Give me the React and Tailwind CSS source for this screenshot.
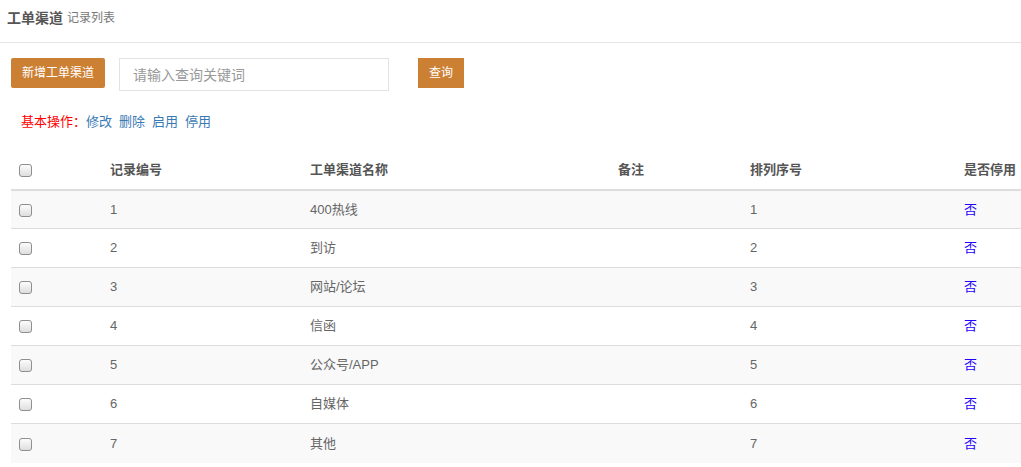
import React from 'react';

const rows = [
    { id: 1, name: '400热线', sort: 1 },
    { id: 2, name: '到访', sort: 2 },
    { id: 3, name: '网站/论坛', sort: 3 },
    { id: 4, name: '信函', sort: 4 },
    { id: 5, name: '公众号/APP', sort: 5 },
    { id: 6, name: '自媒体', sort: 6 },
    { id: 7, name: '其他', sort: 7 },
];

const Box = () => (
    <span className="inline-block w-[13px] h-[13px] rounded-[3px] border border-[#8f8f8f] bg-gradient-to-b from-[#fcfcfc] to-[#dedede] align-middle" />
);

export default function App() {
    return (
        <div className="w-[1021px] h-[467px] overflow-hidden bg-white font-['Helvetica_Neue','Liberation_Sans','Noto_Sans_CJK_SC',sans-serif] text-[#666]">
            {/* Title */}
            <div className="h-[43px] border-b border-[#e5e5e5] pl-[7px] flex items-center pb-[6px]">
                <span className="text-[14px] font-bold text-[#555]">工单渠道</span>
                <span className="text-[12px] text-[#777] ml-[4px]">记录列表</span>
            </div>

            <div className="pl-[11px]">
                {/* Toolbar */}
                <div className="flex items-center mt-[15px] h-[33px]">
                    <button className="h-[30px] w-[94px] rounded-[2px] bg-[#cc8033] text-white text-[12px] self-start">
                        新增工单渠道
                    </button>
                    <input
                        className="ml-[14px] w-[270px] h-[33px] border border-[#e3e3e3] px-[13px] text-[14px] outline-none placeholder:text-[#999]"
                        placeholder="请输入查询关键词"
                    />
                    <button className="ml-[29px] h-[30px] w-[46px] bg-[#cc8033] text-white text-[12px] self-start">
                        查询
                    </button>
                </div>

                {/* Ops */}
                <div className="mt-[21px] pl-[10px] text-[13px] flex gap-[7px]">
                    <span className="text-[#ff0000]">基本操作：</span>
                    <span className="text-[#3979b4] -ml-[7px]">修改</span>
                    <span className="text-[#3979b4]">删除</span>
                    <span className="text-[#3979b4]">启用</span>
                    <span className="text-[#3979b4]">停用</span>
                </div>

                {/* Table */}
                <table className="mt-[20px] w-[1040px] border-collapse text-[13px] table-fixed">
                    <colgroup>
                        <col className="w-[91px]" />
                        <col className="w-[200px]" />
                        <col className="w-[308px]" />
                        <col className="w-[132px]" />
                        <col className="w-[214px]" />
                        <col />
                    </colgroup>
                    <thead>
                        <tr className="h-[38px] border-b-2 border-[#dddddd] text-left text-[#555]">
                            <th className="pl-[8px] font-normal"><Box /></th>
                            <th className="pl-[8px] font-bold">记录编号</th>
                            <th className="pl-[8px] font-bold">工单渠道名称</th>
                            <th className="pl-[8px] font-bold">备注</th>
                            <th className="pl-[8px] font-bold">排列序号</th>
                            <th className="pl-[8px] font-bold">是否停用</th>
                        </tr>
                    </thead>
                    <tbody>
                        {rows.map((r, i) => (
                            <tr
                                key={r.id}
                                className={`h-[39px] border-t border-[#dddddd] first:border-t-0 ${i % 2 === 0 ? 'bg-[#f9f9f9]' : 'bg-white'}`}
                            >
                                <td className="pl-[8px]"><Box /></td>
                                <td className="pl-[8px]">{r.id}</td>
                                <td className="pl-[8px]">{r.name}</td>
                                <td className="pl-[8px]"></td>
                                <td className="pl-[8px]">{r.sort}</td>
                                <td className="pl-[8px] text-[#2200ff]">否</td>
                            </tr>
                        ))}
                    </tbody>
                </table>
            </div>
        </div>
    );
}
